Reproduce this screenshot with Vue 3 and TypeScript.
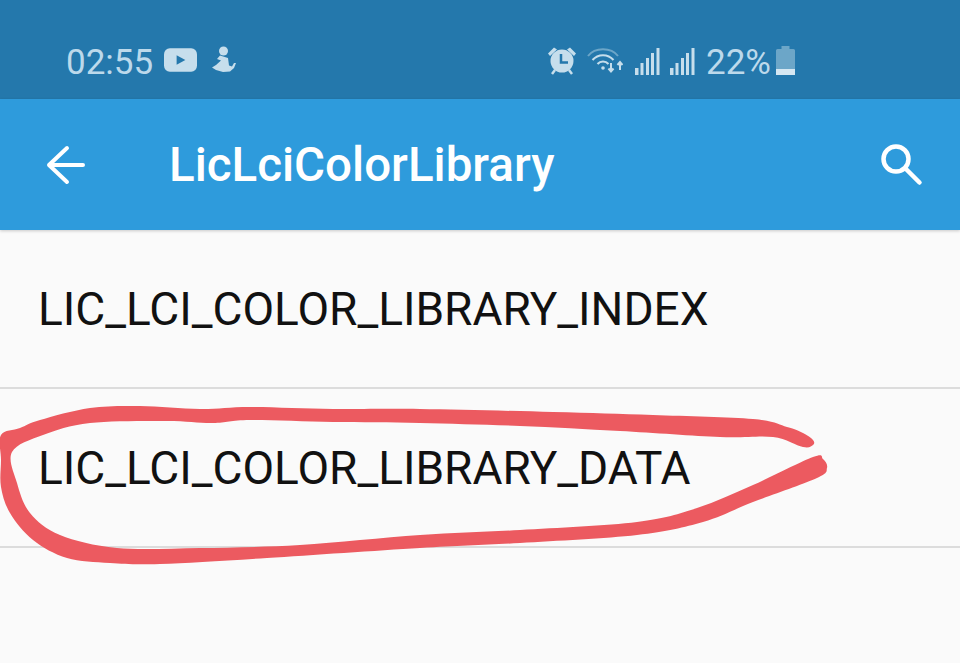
<script setup lang="ts">
const rows = ["LIC_LCI_COLOR_LIBRARY_INDEX", "LIC_LCI_COLOR_LIBRARY_DATA"];

// hand-drawn marker outline, traced as [x, y] points
const scribble: [number, number][] = [
  [813, 440], [803, 433], [787, 427], [753, 419], [653, 415], [553, 412], [420, 409],
  [333, 409], [250, 407], [200, 409], [140, 406], [90, 408], [40, 420], [20, 428], [1, 435],
  [1, 460], [1, 487], [10, 513], [33, 540], [67, 558], [110, 563], [160, 564], [267, 558], [420, 548],
  [520, 543], [637, 535], [703, 522], [753, 502], [817, 478], [827, 468], [823, 459], [813, 457],
  [753, 485], [697, 508], [637, 522], [520, 530], [420, 535], [300, 545], [200, 548],
  [117, 548], [60, 535], [30, 513], [17, 483], [12, 452], [43, 435], [90, 423],
  [167, 421], [213, 423], [250, 420], [333, 422], [420, 423], [520, 426], [620, 431],
  [720, 437], [773, 437], [803, 447], [813, 445],
];

// closed Catmull-Rom curve through the points
const smooth = (pts: [number, number][]) => {
  let d = `M${pts[0][0]} ${pts[0][1]}`;
  for (let i = 0; i < pts.length; i++) {
    const p0 = pts[(i - 1 + pts.length) % pts.length];
    const p1 = pts[i];
    const p2 = pts[(i + 1) % pts.length];
    const p3 = pts[(i + 2) % pts.length];
    const c1x = p1[0] + (p2[0] - p0[0]) / 6;
    const c1y = p1[1] + (p2[1] - p0[1]) / 6;
    const c2x = p2[0] - (p3[0] - p1[0]) / 6;
    const c2y = p2[1] - (p3[1] - p1[1]) / 6;
    d += `C${c1x.toFixed(1)} ${c1y.toFixed(1)} ${c2x.toFixed(1)} ${c2y.toFixed(1)} ${p2[0]} ${p2[1]}`;
  }
  return d + "Z";
};

const scribblePath = smooth(scribble);
</script>

<template>
  <div class="screen">
    <div class="status-bar">
      <div class="status-left">
        <span class="time">02:55</span>
        <svg class="ic-youtube" width="33" height="24" viewBox="0 0 34 24">
          <rect width="34" height="24" rx="6" fill="#c6deec" />
          <path d="M13 7l9 5-9 5z" fill="#2478ac" />
        </svg>
        <svg class="ic-figure" width="25" height="28" viewBox="0 0 25 28" fill="#c6deec">
          <circle cx="12.500" cy="5" r="4.500" />
          <path d="M9 9.500l-3 3.500 4 1.500-5 4.500-4 2.500 4 2.500 7 2 7-.5 4-3.500 2-5h-2l-2 3.500-3-1-1-7.500z" />
        </svg>
      </div>
      <div class="status-right">
        <svg class="ic-alarm" width="30" height="30" viewBox="0 0 30 30">
          <circle cx="15" cy="16" r="11.500" fill="#c6deec" />
          <path d="M1 8.500L7 2.500l3 2L3 11zM29 8.500L23 2.500l-3 2L27 11z" fill="#c6deec" />
          <path d="M5 29l3-4M25 29l-3-4" stroke="#c6deec" stroke-width="2.500" />
          <path d="M14 9v8.500h7" stroke="#2478ac" stroke-width="2.500" fill="none" />
        </svg>
        <svg class="ic-wifi" width="36" height="30" viewBox="0 0 36 30" fill="none" stroke="#c6deec" stroke-width="2">
          <path d="M1 11C8 2 24 2 31 11" opacity=".45" />
          <path d="M5.500 15C11 8.500 21 8.500 26.500 15" />
          <path d="M10.500 19C13.500 15.500 18.500 15.500 21.500 19" />
          <circle cx="16" cy="23" r="1.800" fill="#c6deec" stroke="none" />
          <path d="M24 18v8M21.500 23.500l2.500 3 2.500-3M33 25v-8M30.500 20l2.500-3 2.500 3" />
        </svg>
        <svg class="ic-signal" width="25" height="27" viewBox="0 0 25 27" fill="#c6deec">
          <rect x="0" y="20" width="3.500" height="7" />
          <rect x="5.500" y="15" width="3" height="12" />
          <rect x="11" y="10" width="3" height="17" />
          <rect x="16" y="5" width="3" height="22" />
          <rect x="21.500" y="0" width="3" height="27" />
        </svg>
        <svg class="ic-signal" width="25" height="27" viewBox="0 0 25 27" fill="#c6deec">
          <rect x="0" y="20" width="3.500" height="7" />
          <rect x="5.500" y="15" width="3" height="12" />
          <rect x="11" y="10" width="3" height="17" />
          <rect x="16" y="5" width="3" height="22" />
          <rect x="21.500" y="0" width="3" height="27" />
        </svg>
        <span class="battery-text">22%</span>
        <svg class="ic-battery" width="19" height="29" viewBox="0 0 19 29">
          <path d="M5.500 0h8v3h4a1.500 1.500 0 0 1 1.500 1.500V29H0V4.500A1.500 1.500 0 0 1 1.500 3h4z" fill="#c6deec" opacity=".45" />
          <rect y="23" width="19" height="6" fill="#d5e7f2" />
        </svg>
      </div>
    </div>

    <div class="toolbar">
      <svg class="ic-back" width="40" height="40" viewBox="0 0 40 40" fill="none" stroke="#fff" stroke-width="4" stroke-linecap="round" stroke-linejoin="round">
        <path d="M37 20H3M21 3L3 20l18 17" />
      </svg>
      <span class="title">LicLciColorLibrary</span>
      <svg class="ic-search" width="44" height="44" viewBox="0 0 44 44" fill="none" stroke="#fff" stroke-width="4.500" stroke-linecap="round">
        <circle cx="16" cy="16" r="12.500" />
        <path d="M26 26l13.500 13.500" />
      </svg>
    </div>

    <ul class="list">
      <li v-for="row in rows" :key="row" class="row">{{ row }}</li>
    </ul>

    <svg class="scribble" width="960" height="663" viewBox="0 0 960 663">
      <path :d="scribblePath" fill="#ec5a60" fill-rule="nonzero" />
    </svg>
  </div>
</template>

<style scoped>
.screen {
  position: relative;
  width: 960px;
  height: 663px;
  overflow: hidden;
  background: #fafafa;
  font-family: Roboto, "Liberation Sans", sans-serif;
}

.status-bar {
  height: 99px;
  box-sizing: border-box;
  display: flex;
  align-items: center;
  justify-content: space-between;
  padding: 24px 165px 0 66px;
  background: #2478ac;
  color: #bcd9eb;
}

.status-left,
.status-right {
  display: flex;
  align-items: center;
}

.time {
  font-size: 35px;
  margin-top: 2px;
  margin-right: 11px;
}

.ic-youtube {
  margin-top: -3px;
}

.ic-figure {
  margin-top: -3px;
  margin-left: 14px;
}

.ic-alarm {
  margin-top: -3px;
  margin-right: 10px;
}

.ic-wifi {
  margin-top: -3px;
  margin-right: 12px;
}

.ic-signal {
  margin-right: 10px;
  margin-top: -1px;
}

.battery-text {
  font-size: 35px;
  margin-top: 2px;
  margin-left: 1px;
  margin-right: 5px;
}

.ic-battery {
  margin-top: -3px;
}

.toolbar {
  height: 131px;
  box-sizing: border-box;
  display: flex;
  align-items: center;
  padding: 0 36px 0 46px;
  background: #2e9bdc;
  box-shadow: 0 1px 3px rgba(0, 0, 0, 0.2);
  position: relative;
}

.title {
  margin-left: 83px;
  font-size: 47.500px;
  font-weight: 500;
  color: #fff;
}

.ic-search {
  margin-left: auto;
}

.list {
  list-style: none;
  margin: 0;
  padding: 0;
}

.row {
  height: 159px;
  box-sizing: border-box;
  display: flex;
  align-items: center;
  padding-left: 38px;
  font-size: 46px;
  color: #111;
  border-bottom: 2px solid #dcdcdc;
}

.scribble {
  position: absolute;
  top: 0;
  left: 0;
  pointer-events: none;
}
</style>
